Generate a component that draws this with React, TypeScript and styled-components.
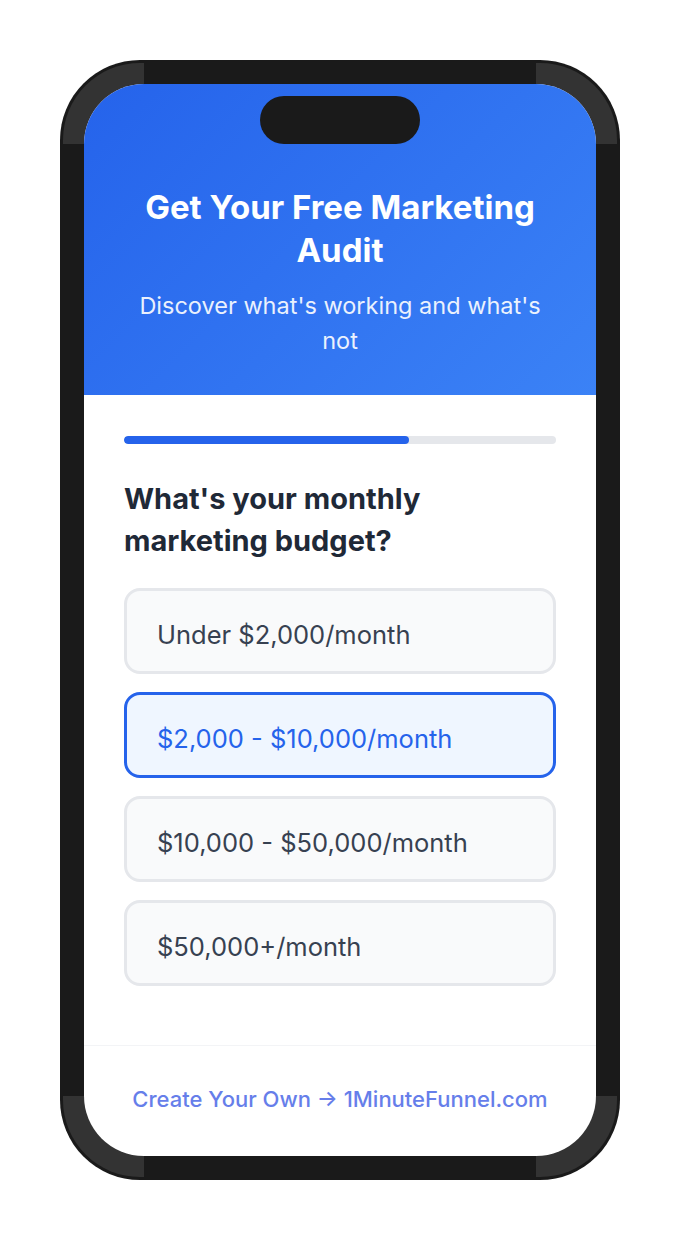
import styled, { createGlobalStyle } from 'styled-components';

const GlobalStyle = createGlobalStyle`
  html, body {
    margin: 0;
    padding: 0;
    background: #ffffff;
  }
  body {
    font-family: 'Inter', 'Noto Sans', sans-serif;
    -webkit-font-smoothing: antialiased;
  }
`;

const Stage = styled.div`
  width: 680px;
  height: 1240px;
  display: flex;
  align-items: center;
  justify-content: center;
`;

const Phone = styled.div`
  position: relative;
  width: 560px;
  height: 1120px;
  box-sizing: border-box;
  padding: 24px;
  border-radius: 80px;
  background: #1a1a1a;
  display: flex;
`;

const Corner = styled.span<{ $v: 'top' | 'bottom'; $h: 'left' | 'right' }>`
  position: absolute;
  ${({ $v }) => $v}: 3px;
  ${({ $h }) => $h}: 3px;
  width: 81px;
  height: 81px;
  background: #333333;
  border-${({ $v, $h }) => `${$v}-${$h}`}-radius: 77px;
`;

const Screen = styled.div`
  position: relative;
  z-index: 1;
  flex: 1;
  border-radius: 60px;
  overflow: hidden;
  background: #ffffff;
  display: flex;
  flex-direction: column;
`;

const Notch = styled.div`
  position: absolute;
  top: 12px;
  left: 50%;
  transform: translateX(-50%);
  width: 160px;
  height: 48px;
  border-radius: 24px;
  background: #1a1a1a;
`;

const Header = styled.header`
  padding: 102px 40px 37px;
  background: linear-gradient(135deg, #2563eb 0%, #3b82f6 100%);
  color: #ffffff;
  text-align: center;
`;

const Title = styled.h1`
  margin: 0;
  font-size: 33px;
  line-height: 43px;
  font-weight: 700;
`;

const Subtitle = styled.p`
  margin: 16px 0 0;
  font-size: 23.5px;
  line-height: 35px;
  font-weight: 400;
  opacity: 0.9;
`;

const Body = styled.main`
  flex: 1;
  padding: 41px 40px 0;
`;

const Progress = styled.div`
  height: 8px;
  border-radius: 4px;
  background: #e5e7eb;
  overflow: hidden;
`;

const ProgressFill = styled.div`
  height: 100%;
  border-radius: 4px;
  background: #2563eb;
`;

const Question = styled.h2`
  margin: 34px 0 26px;
  font-size: 29px;
  line-height: 42px;
  font-weight: 700;
  color: #1f2937;
`;

const Options = styled.div`
  display: flex;
  flex-direction: column;
  gap: 18px;
`;

const Option = styled.button<{ $selected?: boolean }>`
  height: 86px;
  box-sizing: border-box;
  padding: 6px 30px 0;
  display: flex;
  align-items: center;
  text-align: left;
  border-radius: 16px;
  border: 3px solid ${({ $selected }) => ($selected ? '#2563eb' : '#e5e7eb')};
  background: ${({ $selected }) => ($selected ? '#eff6ff' : '#f9fafb')};
  color: ${({ $selected }) => ($selected ? '#2563eb' : '#374151')};
  font-family: 'Inter', 'Noto Sans', sans-serif;
  font-size: 25.5px;
  font-weight: 400;
  cursor: pointer;
`;

const Footer = styled.footer`
  height: 111px;
  padding-bottom: 4px;
  box-sizing: border-box;
  border-top: 1px solid #f3f4f6;
  display: flex;
  align-items: center;
  justify-content: center;
`;

const FooterLink = styled.a`
  color: #667eea;
  font-size: 22px;
  font-weight: 500;
  text-decoration: none;
`;

const options = [
  'Under $2,000/month',
  '$2,000 - $10,000/month',
  '$10,000 - $50,000/month',
  '$50,000+/month',
];

export default function App() {
  const progress = 66;
  const selected = 1;

  return (
    <>
      <GlobalStyle />
      <Stage>
        <Phone>
          <Corner $v="top" $h="left" />
          <Corner $v="top" $h="right" />
          <Corner $v="bottom" $h="left" />
          <Corner $v="bottom" $h="right" />
          <Screen>
            <Notch />
            <Header>
              <Title>Get Your Free Marketing Audit</Title>
              <Subtitle>Discover what's working and what's not</Subtitle>
            </Header>
            <Body>
              <Progress>
                <ProgressFill style={{ width: `${progress}%` }} />
              </Progress>
              <Question>What's your monthly marketing budget?</Question>
              <Options>
                {options.map((label, i) => (
                  <Option key={label} $selected={i === selected}>
                    {label}
                  </Option>
                ))}
              </Options>
            </Body>
            <Footer>
              <FooterLink href="#">Create Your Own → 1MinuteFunnel.com</FooterLink>
            </Footer>
          </Screen>
        </Phone>
      </Stage>
    </>
  );
}
